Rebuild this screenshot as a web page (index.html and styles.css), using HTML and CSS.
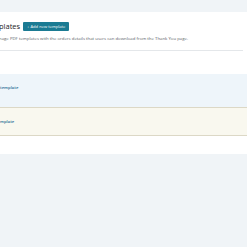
FILE: index.html
```html
<!DOCTYPE html>
<html lang="en">
<head>
  <meta charset="UTF-8">
  <meta name="viewport" content="width=device-width, initial-scale=1.0">
  <title>PDF Templates</title>
  <link rel="stylesheet" href="styles.css">
</head>
<body>
  <div class="topbar"></div>
  <div class="panel">
    <div class="header">
      <h1>plates</h1>
      <button class="add-btn">+ Add new template</button>
    </div>
    <p class="desc">nage PDF templates with the orders details that users can download from the Thank You page.</p>
    <hr class="divider">
    <div class="rows">
      <div class="row row-blue"><a href="#">template</a></div>
      <div class="row row-yellow"><a href="#">mplate</a></div>
    </div>
  </div>
</body>
</html>
```
FILE: styles.css
```css
body {
  font-family: "Open Sans", Arial, sans-serif;
  margin: 0;
  padding: 0;
  background-color: #f0f4f7;
  color: #1d2327;
  overflow: hidden;
}
.topbar {
  height: 12px;
  background: #f0f4f7;
}
.panel {
  background: #ffffff;
  padding-top: 10px;
  padding-bottom: 18px;
}
.header {
  display: flex;
  align-items: center;
  gap: 3px;
  height: 9px;
}
h1 {
  margin: 0 0 0 -1px;
  font-size: 7.5px;
  font-weight: 400;
  line-height: 9px;
  color: #1d2327;
}
.add-btn {
  height: 9px;
  padding: 0 4px;
  background-color: #1b7b93;
  color: #ffffff;
  border: none;
  border-radius: 1px;
  font-family: inherit;
  font-size: 4.1px;
  line-height: 9px;
}
.desc {
  margin: 4px 0 0 -1px;
  font-size: 4.3px;
  line-height: 6px;
  color: #5b6268;
}
.divider {
  border: none;
  border-top: 1px solid #e4e7ea;
  margin: 9px 4px 0 0;
}
.rows {
  margin-top: 23px;
}
.row {
  display: flex;
  align-items: center;
  font-size: 4.2px;
  font-weight: 600;
}
.row a {
  color: #2a6f96;
  text-decoration: none;
}
.row-blue {
  height: 34px;
  align-items: flex-start;
  box-sizing: border-box;
  padding-top: 11px;
  background: #eef5fa;
  border-bottom: 1px solid #dcd8c6;
}
.row-yellow {
  height: 27px;
  background: #f9f8ef;
  border-bottom: 1px solid #dcd8c6;
}
```
